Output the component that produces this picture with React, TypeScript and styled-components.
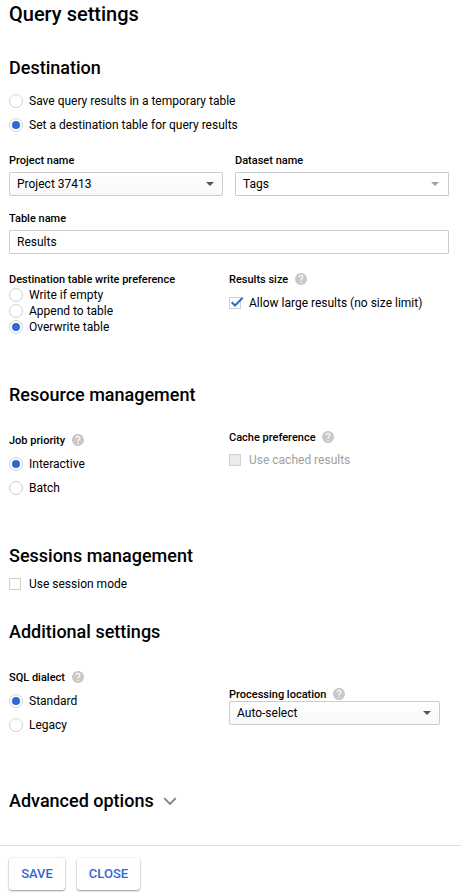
import React from "react";
import styled, { createGlobalStyle } from "styled-components";

const GlobalStyle = createGlobalStyle`
  *, *::before, *::after { box-sizing: border-box; }
  body {
    margin: 0;
    background: #fff;
    color: #000;
    font-family: Roboto, "Liberation Sans", sans-serif;
    font-size: 12px;
    line-height: 16px;
    overflow: hidden;
  }
`;

const Panel = styled.form`
  display: flex;
  flex-direction: column;
  width: 461px;
  height: 895px;
`;

const Content = styled.div`
  flex: none;
  height: 845px;
  padding: 2px 12px 0 9px;
`;

const Title = styled.h1`
  margin: 0 0 30px;
  font-size: 20px;
  font-weight: 500;
  line-height: 24px;
`;

const Section = styled.section<{ $gap: number }>`
  margin-bottom: ${(p) => p.$gap}px;
`;

const Heading = styled.h2<{ $gap?: number }>`
  display: flex;
  align-items: center;
  margin: 0 0 ${(p) => p.$gap ?? 0}px;
  font-size: 18px;
  font-weight: 500;
  line-height: 24px;
`;

const Columns = styled.div`
  display: grid;
  grid-template-columns: 220px 211px;
`;

const FieldPair = styled.div`
  display: grid;
  grid-template-columns: 214px 214px;
  column-gap: 12px;
  margin-top: 19px;
`;

const Field = styled.div<{ $top?: number }>`
  margin-top: ${(p) => p.$top ?? 0}px;
`;

const Label = styled.div<{ $gap?: number }>`
  display: flex;
  align-items: center;
  height: 16px;
  padding-top: 2px;
  margin-bottom: ${(p) => p.$gap ?? 0}px;
  font-size: 11px;
  font-weight: 500;
`;

const Options = styled.div<{ $gap: number }>`
  display: flex;
  flex-direction: column;
  gap: ${(p) => p.$gap}px;
`;

const OptionRow = styled.label<{ $disabled?: boolean }>`
  display: flex;
  align-items: center;
  height: 16px;
  color: ${(p) => (p.$disabled ? "#a0a0a0" : "inherit")};
`;

const RadioCircle = styled.span<{ $on?: boolean }>`
  display: grid;
  place-items: center;
  width: 14px;
  height: 14px;
  margin-right: 6px;
  border: 1px solid #d0d0d0;
  border-radius: 50%;
  &::after {
    content: "";
    width: 8px;
    height: 8px;
    border-radius: 50%;
    background: ${(p) => (p.$on ? "#3367d6" : "transparent")};
  }
`;

const Box = styled.span<{ $disabled?: boolean }>`
  display: block;
  flex: none;
  width: 12px;
  height: 12px;
  margin-right: 8px;
  border: 1px solid ${(p) => (p.$disabled ? "#d2d2d2" : "#cfcfcf")};
  background: ${(p) => (p.$disabled ? "#ebebeb" : "#fff")};
`;

const Tick = styled.svg`
  display: block;
  margin: -1px 0 0;
  overflow: visible;
`;

const SelectBox = styled.div<{ $flat?: boolean }>`
  display: flex;
  align-items: center;
  justify-content: space-between;
  height: 24px;
  padding: 0 ${(p) => (p.$flat ? 9 : 8)}px 0 7px;
  border: 1px solid #ccc;
  border-radius: ${(p) => (p.$flat ? 1 : 2)}px;
  background: ${(p) => (p.$flat ? "#fff" : "linear-gradient(#fff, #f8f8f8)")};
`;

const TextInput = styled.input`
  display: block;
  width: 440px;
  height: 24px;
  padding: 0 7px;
  border: 1px solid #ccc;
  border-radius: 1px;
  background: #fff;
  color: inherit;
  font: inherit;
  outline: none;
`;

const HelpSvg = styled.svg`
  display: block;
  margin: -2px 0 0 6.8px;
`;

const ChevronSvg = styled.svg`
  display: block;
  margin: 1px 0 0 9px;
`;

const Footer = styled.footer`
  display: flex;
  flex: none;
  gap: 12px;
  height: 50px;
  padding: 12px 9px 0;
  border-top: 1px solid #e0e0e0;
`;

const Button = styled.button<{ $width: number }>`
  width: ${(p) => p.$width}px;
  height: 32px;
  padding: 0;
  border: 0;
  border-radius: 3px;
  background: #fff;
  box-shadow: 0 1px 2px rgba(0, 0, 0, 0.38), 0 0 2px rgba(0, 0, 0, 0.14);
  color: #3367d6;
  font: 500 13px/32px Roboto, sans-serif;
`;

const Help = () => (
  <HelpSvg width="12" height="12" viewBox="2 2 20 20">
    <path
      fill="#c8c8c8"
      d="M12 2C6.48 2 2 6.48 2 12s4.48 10 10 10 10-4.48 10-10S17.52 2 12 2zm1 17h-2v-2h2v2zm2.07-7.75l-.9.92C13.45 12.9 13 13.5 13 15h-2v-.5c0-1.1.45-2.1 1.17-2.83l1.24-1.26c.37-.36.59-.86.59-1.41 0-1.1-.9-2-2-2s-2 .9-2 2H8c0-2.21 1.79-4 4-4s4 1.79 4 4c0 .88-.36 1.68-.93 2.25z"
    />
  </HelpSvg>
);

const Radio = ({ text, on }: { text: string; on?: boolean }) => (
  <OptionRow>
    <RadioCircle $on={on} />
    {text}
  </OptionRow>
);

const Check = ({ text, on, disabled }: { text: string; on?: boolean; disabled?: boolean }) => (
  <OptionRow $disabled={disabled}>
    <Box $disabled={disabled}>
      {on && (
        <Tick width="13" height="11" viewBox="0 0 13 11">
          <path d="M1.7 5.2 5 8.5 12.7 .8" fill="none" stroke="#3367d6" strokeWidth="2" />
        </Tick>
      )}
    </Box>
    {text}
  </OptionRow>
);

const Select = ({ value, flat }: { value: string; flat?: boolean }) => (
  <SelectBox $flat={flat}>
    <span>{value}</span>
    <svg width="8" height="4" viewBox="0 0 8 4">
      <path d="M0 0h8L4 4z" fill={flat ? "#a0a0a0" : "#555"} />
    </svg>
  </SelectBox>
);

export default function App() {
  return (
    <>
      <GlobalStyle />
      <Panel>
        <Content>
          <Title>Query settings</Title>

          <Section $gap={48}>
            <Heading $gap={13}>Destination</Heading>
            <Options $gap={8}>
              <Radio text="Save query results in a temporary table" />
              <Radio text="Set a destination table for query results" on />
            </Options>
            <FieldPair>
              <Field>
                <Label $gap={4}>Project name</Label>
                <Select value="Project 37413" />
              </Field>
              <Field>
                <Label $gap={4}>Dataset name</Label>
                <Select value="Tags" flat />
              </Field>
            </FieldPair>
            <Field $top={14}>
              <Label $gap={4}>Table name</Label>
              <TextInput defaultValue="Results" />
            </Field>
            <Columns>
              <Field $top={17}>
                <Label>Destination table write preference</Label>
                <Options $gap={0}>
                  <Radio text="Write if empty" />
                  <Radio text="Append to table" />
                  <Radio text="Overwrite table" on />
                </Options>
              </Field>
              <Field $top={17}>
                <Label $gap={8}>
                  Results size
                  <Help />
                </Label>
                <Check text="Allow large results (no size limit)" on />
              </Field>
            </Columns>
          </Section>

          <Section $gap={48}>
            <Heading $gap={22}>Resource management</Heading>
            <Columns>
              <Field $top={3}>
                <Label $gap={8}>
                  Job priority
                  <Help />
                </Label>
                <Options $gap={8}>
                  <Radio text="Interactive" on />
                  <Radio text="Batch" />
                </Options>
              </Field>
              <Field>
                <Label $gap={7}>
                  Cache preference
                  <Help />
                </Label>
                <Check text="Use cached results" disabled />
              </Field>
            </Columns>
          </Section>

          <Section $gap={28}>
            <Heading $gap={8}>Sessions management</Heading>
            <Check text="Use session mode" />
          </Section>

          <Section $gap={56}>
            <Heading $gap={25}>Additional settings</Heading>
            <Columns>
              <Field>
                <Label $gap={8}>
                  SQL dialect
                  <Help />
                </Label>
                <Options $gap={8}>
                  <Radio text="Standard" on />
                  <Radio text="Legacy" />
                </Options>
              </Field>
              <Field $top={17}>
                <Label $gap={-1}>
                  Processing location
                  <Help />
                </Label>
                <Select value="Auto-select" />
              </Field>
            </Columns>
          </Section>

          <Heading>
            Advanced options
            <ChevronSvg width="14" height="9" viewBox="0 0 14 9">
              <path d="M1.2 1.2 7 7 12.8 1.2" fill="none" stroke="#808080" strokeWidth="1.8" />
            </ChevronSvg>
          </Heading>
        </Content>
        <Footer>
          <Button type="button" $width={56}>SAVE</Button>
          <Button type="button" $width={63}>CLOSE</Button>
        </Footer>
      </Panel>
    </>
  );
}
